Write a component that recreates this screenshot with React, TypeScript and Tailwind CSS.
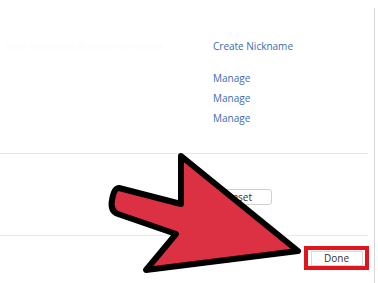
export default function App() {
  const font = { fontFamily: '"Open Sans", "Noto Sans", sans-serif' };

  return (
    <div className="relative h-[283px] w-[378px] overflow-hidden bg-white" style={font}>
      <div className="flex">
        <div className="w-[368px]">
          <div className="pt-9">
            <div className="flex h-5 items-center text-[10px] leading-5">
              <span className="w-[213px] pl-[6px] text-[#fcfcfc]">Your nickname is shown to others</span>
              <a className="text-[#3b6bb2]">Create Nickname</a>
            </div>
            <div className="mt-3 flex flex-col">
              {["Manage", "Manage", "Manage"].map((label, i) => (
                <div key={i} className="flex h-5 items-center pl-[213px] text-[10px] leading-5 text-[#3b6bb2]">
                  {label}
                </div>
              ))}
            </div>
          </div>

          <div className="mt-[25px] border-t border-[#e8e8e8]" />

          <div className="flex justify-end pr-[96px] pt-[35px]">
            <button className="h-4 w-[60px] rounded-[3px] border border-[#d0d0d0] bg-white pr-[19px] text-right text-[10px] leading-[14px] text-[#333]">
              Reset
            </button>
          </div>

          <div className="mt-[30px] border-t border-[#e8e8e8]" />

          <div className="pl-[304px] pt-[10px]">
            <div className="flex h-6 w-[65px] items-center justify-center border-[4px] border-[#e2141c] bg-white">
              <div className="flex h-[15px] w-[52px] items-center justify-center border border-[#d8d8d8] text-[10px] leading-none text-[#333]">
                Done
              </div>
            </div>
          </div>
        </div>
        <div className="ml-[6px] mt-2 h-[275px] w-px bg-[#d6d6d6]" />
      </div>

      <svg className="absolute left-0 top-0" width="378" height="283" viewBox="0 0 378 283">
        <path
          d="M 119 188 L 181 204 L 181 156 L 298 251 L 146 270 L 176 234 L 118 214 Q 110 211 112 200 Q 114 188 119 188 Z"
          fill="#dc3142"
          stroke="#000"
          strokeWidth="6"
          strokeLinejoin="round"
        />
      </svg>
    </div>
  );
}
